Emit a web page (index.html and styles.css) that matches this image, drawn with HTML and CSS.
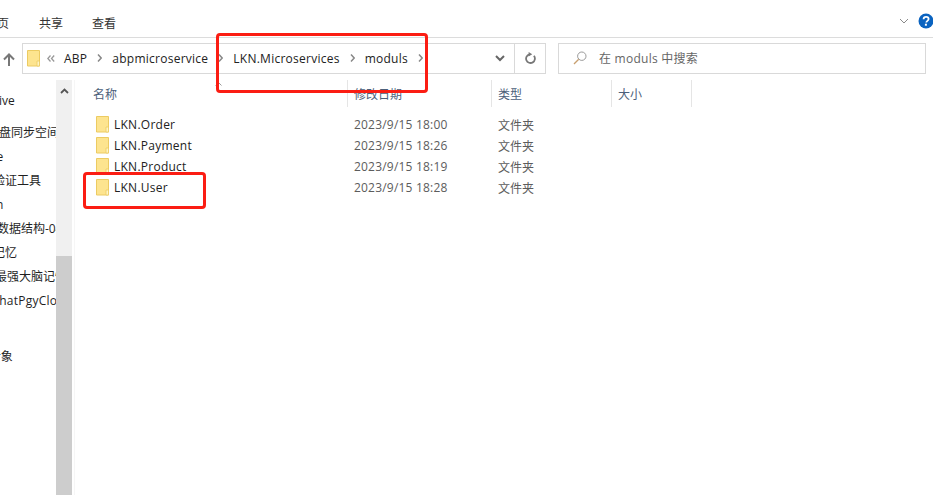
FILE: index.html
```html
<!DOCTYPE html>
<html lang="zh-CN">
<head>
<meta charset="utf-8">
<title>moduls</title>
<link rel="stylesheet" href="styles.css">
</head>
<body>
<div class="window">
  <header class="ribbon">
    <span class="tab tab-cut">页</span>
    <span class="tab">共享</span>
    <span class="tab">查看</span>
    <span class="ribbon-space"></span>
    <svg class="ribbon-chevron" width="10" height="6" viewBox="0 0 10 6"><path d="M1 1l4 4 4-4" fill="none" stroke="#8a8a8a"/></svg>
    <svg class="help" width="16" height="16" viewBox="0 0 16 16"><circle cx="8" cy="8" r="7.5" fill="#0a63c0"/><path d="M5.6 6.2c0-1.500 1-2.300 2.500-2.300s2.500.8 2.500 2.100c0 1.900-2.300 1.800-2.300 3.600" fill="none" stroke="#fff" stroke-width="1.800"/><rect x="6.900" y="10.700" width="2" height="2" fill="#fff"/></svg>
  </header>

  <nav class="address-row">
    <svg class="up" width="12" height="13" viewBox="0 0 12 13"><path d="M6 13V2M1 6.500L6 1.500l5 5" fill="none" stroke="#777" stroke-width="2"/></svg>
    <div class="address">
      <svg class="folder crumb-folder" width="13" height="17" viewBox="0 0 13 17"><use href="#folder-shape"/></svg>
      <svg class="overflow" width="8" height="7" viewBox="0 0 8 7"><path d="M3.500.5L.8 3.500l2.700 3M7.200.5L4.500 3.500l2.700 3" fill="none" stroke="#999" stroke-width="1.300"/></svg>
      <span class="crumb crumb-abp">ABP</span>
      <svg class="sep" width="5" height="8" viewBox="0 0 5 8"><path d="M1 .5L4.200 4 1 7.500" fill="none" stroke="#888" stroke-width="1.500"/></svg>
      <span class="crumb">abpmicroservice</span>
      <svg class="sep" width="5" height="8" viewBox="0 0 5 8"><path d="M1 .5L4.200 4 1 7.500" fill="none" stroke="#888" stroke-width="1.500"/></svg>
      <span class="crumb">LKN.Microservices</span>
      <svg class="sep" width="5" height="8" viewBox="0 0 5 8"><path d="M1 .5L4.200 4 1 7.500" fill="none" stroke="#888" stroke-width="1.500"/></svg>
      <span class="crumb">moduls</span>
      <svg class="sep" width="5" height="8" viewBox="0 0 5 8"><path d="M1 .5L4.200 4 1 7.500" fill="none" stroke="#888" stroke-width="1.500"/></svg>
      <span class="address-space"></span>
      <svg class="drop" width="10" height="7" viewBox="0 0 10 7"><path d="M1 1l4 4 4-4" fill="none" stroke="#666" stroke-width="2"/></svg>
      <span class="refresh">
        <svg width="11" height="12" viewBox="0 0 11 12"><path d="M8.900 3.800A4.400 4.400 0 1 1 4.500 2.300" fill="none" stroke="#777" stroke-width="1.800"/><path d="M3.600 0v4.600L7.200 2.300z" fill="#777"/></svg>
      </span>
    </div>
    <div class="search">
      <svg width="14" height="14" viewBox="0 0 14 14"><circle cx="8.800" cy="5.200" r="4.200" fill="none" stroke="#999"/><path d="M5.700 8.300L1 13" stroke="#c8a070" stroke-width="1.300"/></svg>
      <span class="search-text">在 moduls 中搜索</span>
    </div>
  </nav>

  <div class="content">
    <aside class="sidebar">
      <ul class="tree">
        <li class="node cut-a">OneDrive</li>
        <li class="node gap cut-b">百度网盘同步空间</li>
        <li class="node cut-c">Adobe</li>
        <li class="node cut-d">数字验证工具</li>
        <li class="node cut-e">Admin</li>
        <li class="node cut-f">算法数据结构-04</li>
        <li class="node cut-g">学习记忆</li>
        <li class="node cut-h">世界最强大脑记忆</li>
        <li class="node cut-i">WeChatPgyCloud</li>
        <li class="node skip cut-j">3D 对象</li>
      </ul>
      <div class="scrollbar">
        <svg class="scroll-up" width="9" height="6" viewBox="0 0 9 6"><path d="M1 5l3.500-3.500L8 5" fill="none" stroke="#555" stroke-width="1.800"/></svg>
        <span class="thumb"></span>
      </div>
    </aside>

    <main class="files">
      <div class="columns">
        <span class="col col-name">名称</span>
        <span class="col col-date">修改日期</span>
        <span class="col col-type">类型</span>
        <span class="col col-size">大小</span>
      </div>
      <div class="file"><svg class="folder" width="13" height="17" viewBox="0 0 13 17"><use href="#folder-shape"/></svg><span class="file-name">LKN.Order</span><span class="file-date">2023/9/15 18:00</span><span class="file-type">文件夹</span></div>
      <div class="file"><svg class="folder" width="13" height="17" viewBox="0 0 13 17"><use href="#folder-shape"/></svg><span class="file-name">LKN.Payment</span><span class="file-date">2023/9/15 18:26</span><span class="file-type">文件夹</span></div>
      <div class="file"><svg class="folder" width="13" height="17" viewBox="0 0 13 17"><use href="#folder-shape"/></svg><span class="file-name">LKN.Product</span><span class="file-date">2023/9/15 18:19</span><span class="file-type">文件夹</span></div>
      <div class="file"><svg class="folder" width="13" height="17" viewBox="0 0 13 17"><use href="#folder-shape"/></svg><span class="file-name">LKN.User</span><span class="file-date">2023/9/15 18:28</span><span class="file-type">文件夹</span></div>
    </main>
  </div>

  <svg class="sort-mark" width="7" height="4" viewBox="0 0 7 4"><path d="M.5 3.500l3-3 3 3" fill="none" stroke="#9a9a9a"/></svg>
  <span class="mark mark-path"></span>
  <span class="mark mark-user"></span>
</div>

<svg class="defs" width="0" height="0">
  <defs>
    <g id="folder-shape">
      <path d="M.5.500h12v15.500H.5z" fill="#fde48f" stroke="#eccb62"/>
      <path d="M10 11h2.500v5H10z" fill="#fff4c4" stroke="#eccb62" stroke-width=".8"/>
    </g>
  </defs>
</svg>
</body>
</html>
```

FILE: styles.css
```css
* { box-sizing: border-box; }
html, body { margin: 0; height: 100%; overflow: hidden; background: #fff; }
body { font-family: "Open Sans", "Noto Sans CJK SC", sans-serif; font-size: 12px; color: #1f1f1f; }
ul { list-style: none; margin: 0; padding: 0; }

.window { position: relative; width: 933px; height: 495px; display: flex; flex-direction: column; overflow: hidden; }
.defs { position: absolute; }

.ribbon { height: 38px; flex: none; display: flex; align-items: center; padding: 9px 0 0 0; border-bottom: 1px solid #dcdcdc; color: #333; overflow: hidden; }
.tab { flex: none; width: 53px; }
.tab-cut { margin: 0 27px 0 -3px; width: 15px; }
.ribbon-space { flex: 1; }
.ribbon-chevron { margin-right: 9px; margin-top: -5px; }
.help { margin-right: -1px; margin-top: -5px; }

.address-row { height: 30px; margin-top: 5px; flex: none; display: flex; align-items: center; padding-left: 3px; }
.up { flex: none; margin-right: 7px; margin-top: 2px; }
.address { width: 524px; height: 31px; border: 1px solid #d9d9d9; display: flex; align-items: center; padding-left: 4px; color: #222; flex: none; }
.crumb-folder { flex: none; }
.overflow { margin-left: 7px; margin-right: 9px; flex: none; }
.crumb { flex: none; letter-spacing: .25px; }
.sep { flex: none; margin: 0 10px; }
.address-space { flex: 1; }
.drop { margin-right: 9px; flex: none; }
.refresh { width: 31px; height: 29px; border-left: 1px solid #d9d9d9; display: flex; align-items: center; justify-content: center; flex: none; }
.search { width: 368px; height: 31px; margin-left: 12px; border: 1px solid #d9d9d9; display: flex; align-items: center; padding-left: 14px; color: #666; flex: none; }
.search-text { margin-left: 12px; letter-spacing: .25px; }

.content { flex: 1; min-height: 0; display: flex; margin-top: 7px; }

.sidebar { width: 75px; flex: none; display: flex; border-right: 1px solid #f6f6f6; padding-right: 3px; }
.tree { width: 56px; flex: none; overflow: hidden; padding-top: 9px; color: #1f1f1f; }
.node { height: 24px; line-height: 24px; white-space: nowrap; }
.gap { margin-top: 8px; }
.skip { margin-top: 32px; }
.cut-a { margin-left: -38px; }
.cut-b { margin-left: -37px; }
.cut-c { margin-left: -33px; }
.cut-d { margin-left: -31px; }
.cut-e { margin-left: -33px; }
.cut-f { margin-left: -27px; }
.cut-g { margin-left: -31px; }
.cut-h { margin-left: -29px; }
.cut-i { margin-left: -27px; letter-spacing: .25px; }
.cut-j { margin-left: -30px; }

.scrollbar { width: 16px; flex: none; background: #f0f0f0; display: flex; flex-direction: column; align-items: center; }
.scroll-up { margin-top: 8px; flex: none; }
.thumb { width: 100%; margin-top: 162px; flex: 1; background: #cdcdcd; }

.files { flex: 1; min-width: 0; }
.columns { display: grid; grid-template-columns: 272px 144px 120px 81px; height: 27px; margin-bottom: 7px; color: #4c607a; }
.col { display: flex; align-items: center; padding-left: 6px; border-left: 1px solid #e5e5e5; }
.col-name { border-left: none; padding-left: 18px; }
.col-size { border-right: 1px solid #e5e5e5; }

.file { display: grid; grid-template-columns: 18px 240px 144px 120px; height: 21px; align-items: center; margin-left: 21px; }
.folder { display: block; }
.file-name { color: #222; letter-spacing: .25px; }
.file-date { color: #5c5c5c; letter-spacing: .2px; }
.file-type { color: #5c5c5c; }

.sort-mark { position: absolute; left: 215px; top: 82px; }
.mark { position: absolute; border: 3px solid #fb1d13; border-radius: 4px; background: transparent; }
.mark-path { left: 216px; top: 33px; width: 212px; height: 60px; }
.mark-user { left: 83px; top: 172px; width: 123px; height: 37px; }
```
